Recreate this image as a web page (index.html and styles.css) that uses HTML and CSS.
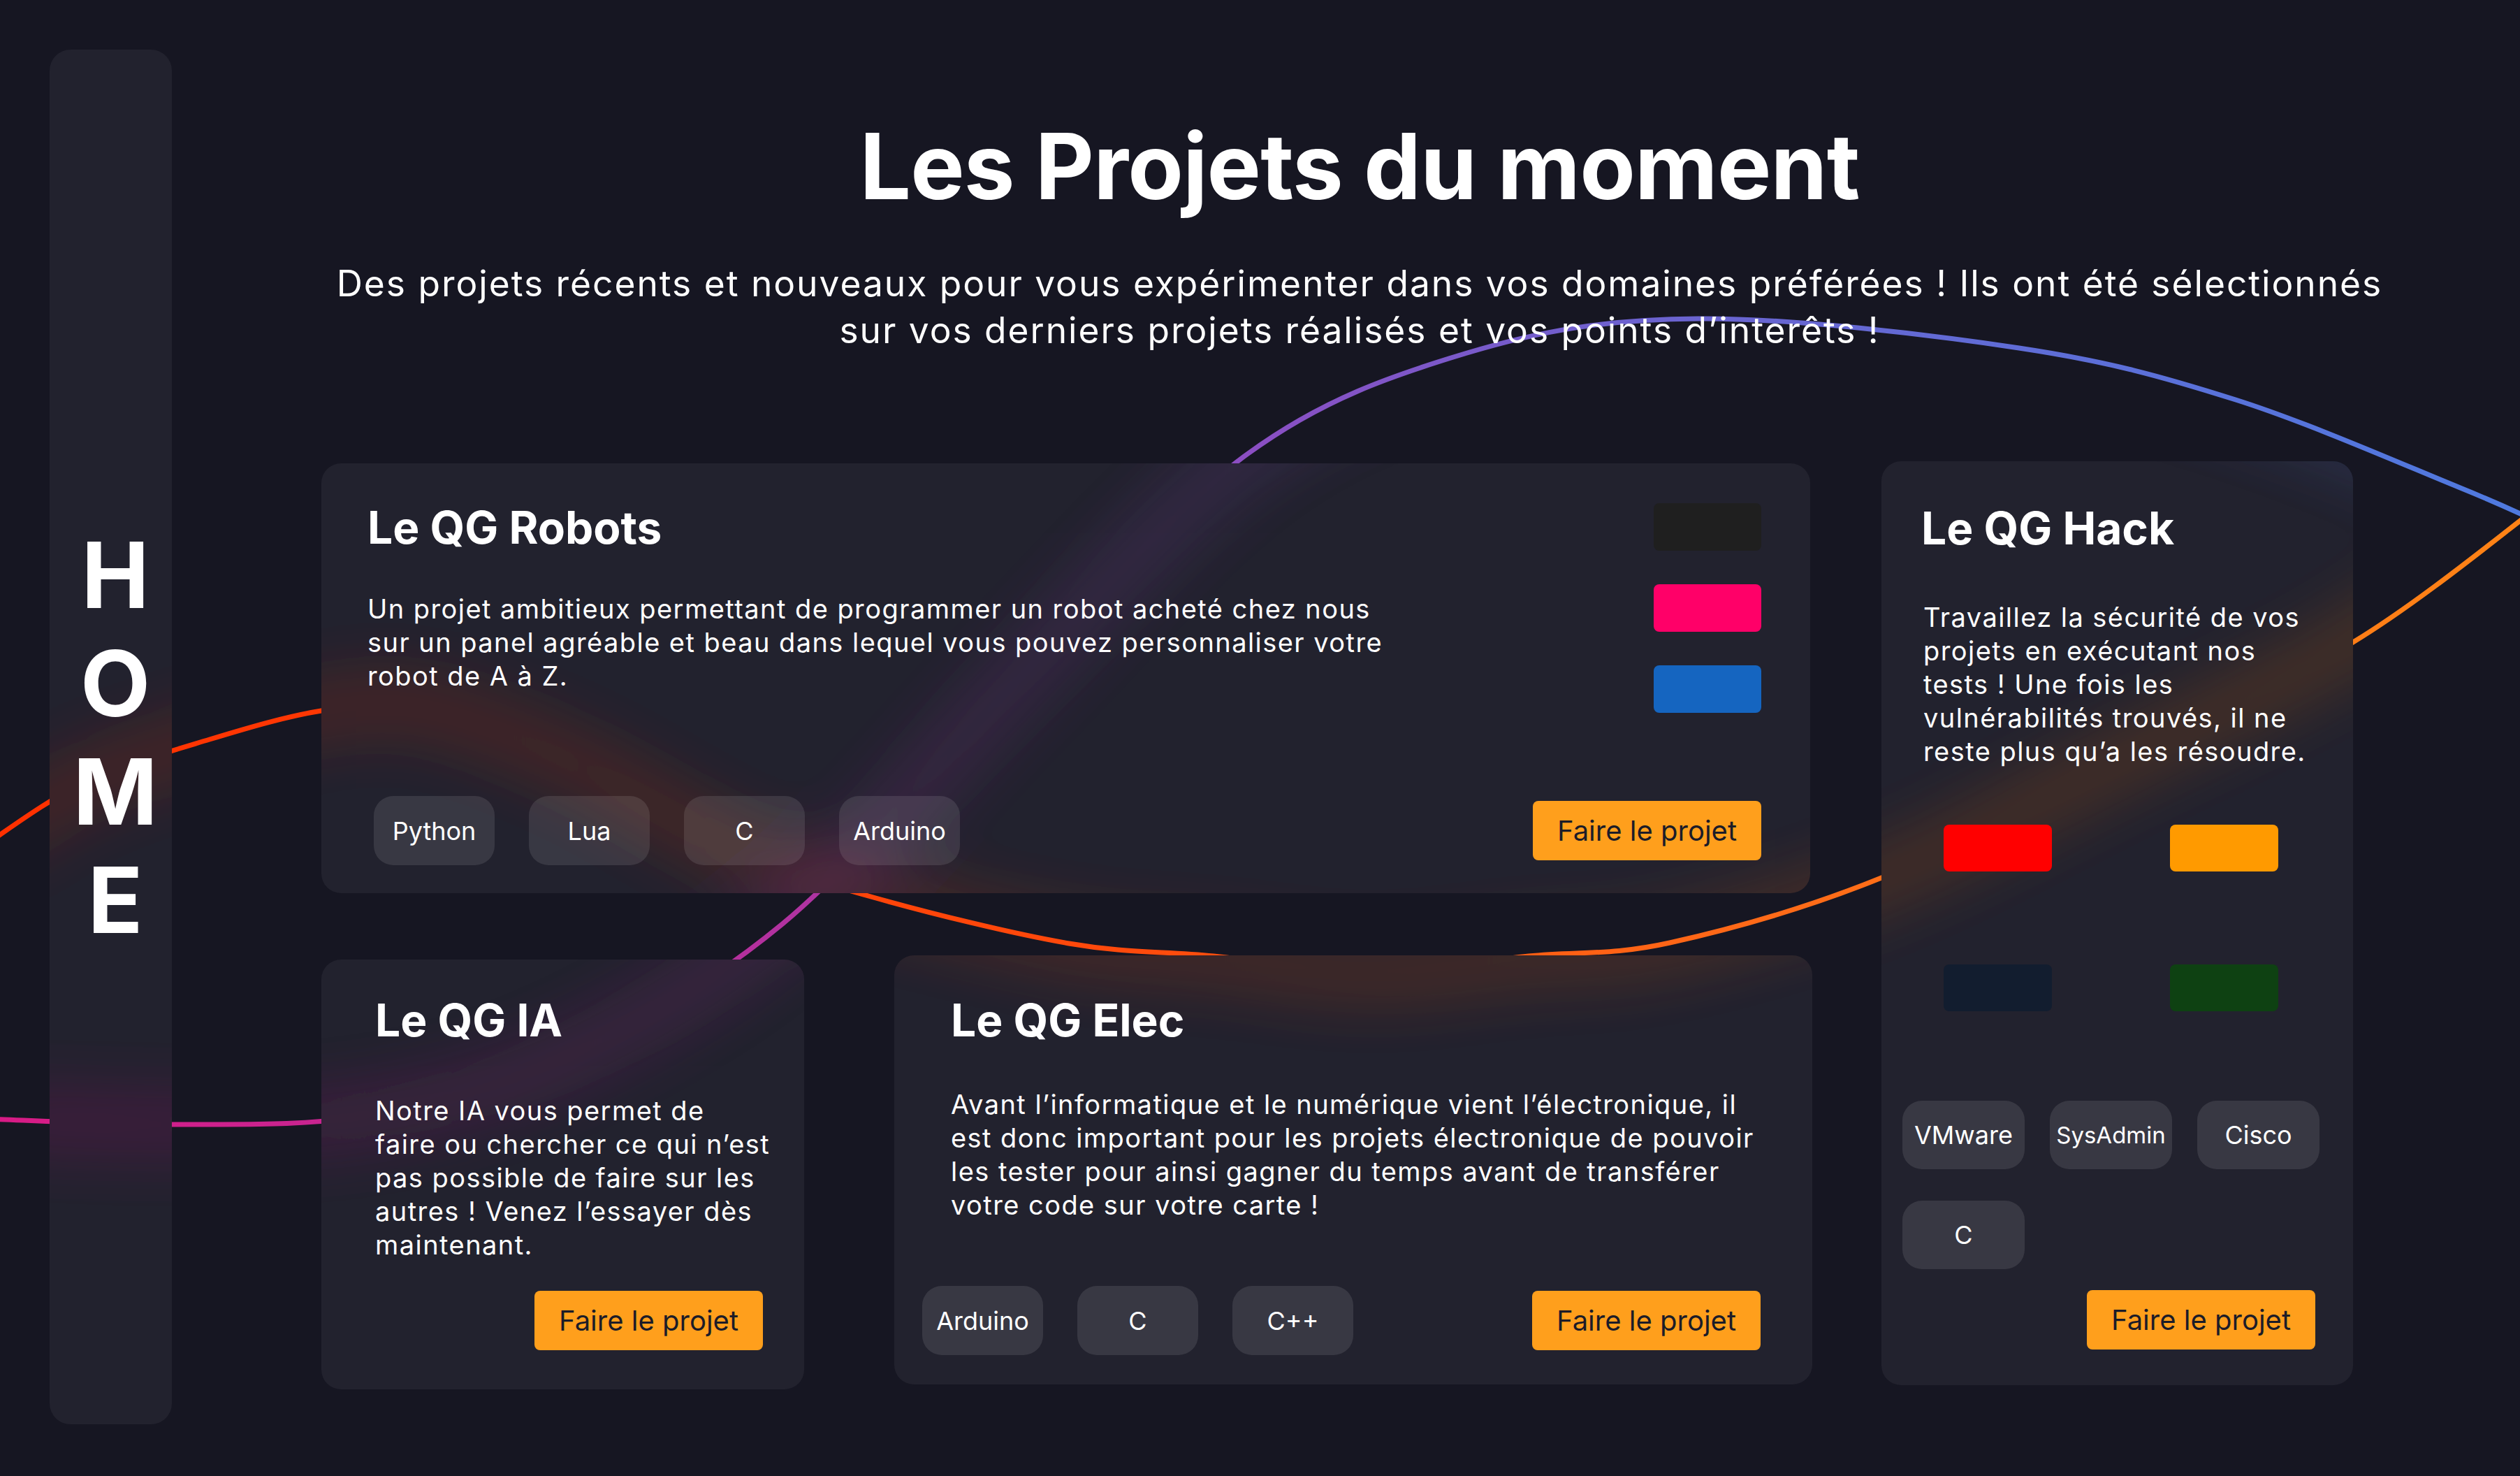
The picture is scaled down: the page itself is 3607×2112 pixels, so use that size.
FILE: index.html
```html
<!DOCTYPE html>
<html lang="fr">
<head>
<meta charset="utf-8">
<title>Les Projets du moment</title>
<link rel="stylesheet" href="styles.css">
</head>
<body>
<svg class="bg-lines" width="3607" height="2112" viewBox="0 0 3607 2112" xmlns="http://www.w3.org/2000/svg" aria-hidden="true">
  <defs>
    <linearGradient id="gradA" gradientUnits="userSpaceOnUse" x1="0" y1="0" x2="3607" y2="0">
      <stop offset="0" stop-color="#d81b86"/>
      <stop offset="0.3" stop-color="#b4309e"/>
      <stop offset="0.5" stop-color="#8a4fc3"/>
      <stop offset="0.65" stop-color="#6c62cf"/>
      <stop offset="1" stop-color="#4f7adf"/>
    </linearGradient>
    <linearGradient id="gradB" gradientUnits="userSpaceOnUse" x1="0" y1="0" x2="3607" y2="0">
      <stop offset="0" stop-color="#ff3000"/>
      <stop offset="0.45" stop-color="#ff4a0c"/>
      <stop offset="0.7" stop-color="#ff6a18"/>
      <stop offset="1" stop-color="#ff8316"/>
    </linearGradient>
    <filter id="glowBlur" filterUnits="userSpaceOnUse" x="-400" y="-400" width="4400" height="2900">
      <feGaussianBlur stdDeviation="50"/>
    </filter>
    <path id="lineA" fill="none" stroke="url(#gradA)" stroke-linecap="round" d="M -20 1601 C 25 1602.3, 160 1609.7, 250 1609 C 340 1608.3, 428.3 1612.2, 520 1597 C 611.7 1581.8, 700 1563.8, 800 1518 C 900 1472.2, 1011.7 1411.7, 1120 1322 C 1228.3 1232.3, 1339.2 1092, 1450 980 C 1560.8 868, 1676.7 729.2, 1785 650 C 1893.3 570.8, 1992.5 537.3, 2100 505 C 2207.5 472.7, 2298.3 457.2, 2430 456 C 2561.7 454.8, 2761.7 478.7, 2890 498 C 3018.3 517.3, 3095.2 538.8, 3200 572 C 3304.8 605.2, 3445.7 667.3, 3519 697 C 3592.3 726.7, 3619.8 741.2, 3640 750"/>
    <path id="lineB" fill="none" stroke="url(#gradB)" stroke-linecap="round" d="M -20 1208 C 3.3 1193.3, 66.7 1145, 120 1120 C 173.3 1095, 243.3 1075.2, 300 1058 C 356.7 1040.8, 410 1025, 460 1017 C 510 1009, 540 997.8, 600 1010 C 660 1022.2, 745 1055.8, 820 1090 C 895 1124.2, 978.3 1182.7, 1050 1215 C 1121.7 1247.3, 1170 1261.5, 1250 1284 C 1330 1306.5, 1448.8 1336, 1530 1350 C 1611.2 1364, 1665 1361, 1737 1368 C 1809 1375, 1886.8 1392, 1962 1392 C 2037.2 1392, 2116.7 1375.2, 2188 1368 C 2259.3 1360.8, 2305.8 1367.7, 2390 1349 C 2474.2 1330.3, 2586.3 1299.2, 2693 1256 C 2799.7 1212.8, 2917.5 1146.2, 3030 1090 C 3142.5 1033.8, 3266.3 980.7, 3368 919 C 3469.7 857.3, 3594.7 753.2, 3640 720"/>
  </defs>
  <use href="#lineA" stroke-width="7"/>
  <use href="#lineB" stroke-width="7"/>
</svg>

<div class="page">
  <aside class="sidebar panel">
    <svg class="glow" viewBox="71 71 175 1967" preserveAspectRatio="none" aria-hidden="true">
      <g filter="url(#glowBlur)" stroke-width="16"><use href="#lineA"/><use href="#lineB"/></g>
    </svg>
    <div class="home">
      <span>H</span>
      <span>O</span>
      <span>M</span>
      <span>E</span>
    </div>
  </aside>

  <main class="main">
    <header class="intro">
      <h1 class="intro-title">Les Projets du moment</h1>
      <p class="intro-text">Des projets récents et nouveaux pour vous expérimenter dans vos domaines préférées ! Ils ont été sélectionnés<br>sur vos derniers projets réalisés et vos points d’interêts !</p>
    </header>

    <section class="projects">
      <div class="projects-left">
        <article class="card panel card-robots">
          <svg class="glow" viewBox="460 663 2131 615" preserveAspectRatio="none" aria-hidden="true">
            <g filter="url(#glowBlur)" stroke-width="16"><use href="#lineA"/><use href="#lineB"/></g>
          </svg>
          <div class="card-top">
            <div class="card-head">
              <h2 class="card-title">Le QG Robots</h2>
              <p class="card-text">Un projet ambitieux permettant de programmer un robot acheté chez nous sur un panel agréable et beau dans lequel vous pouvez personnaliser votre robot de A à Z.</p>
            </div>
            <div class="swatch-col">
              <span class="swatch sw-black"></span>
              <span class="swatch sw-pink"></span>
              <span class="swatch sw-blue"></span>
            </div>
          </div>
          <div class="card-bottom">
            <div class="tags">
              <span class="tag">Python</span>
              <span class="tag">Lua</span>
              <span class="tag">C</span>
              <span class="tag">Arduino</span>
            </div>
            <a class="btn" href="#">Faire le projet</a>
          </div>
        </article>

        <div class="projects-row">
          <article class="card panel card-ia">
            <svg class="glow" viewBox="460 1373 691 615" preserveAspectRatio="none" aria-hidden="true">
              <g filter="url(#glowBlur)" stroke-width="16"><use href="#lineA"/><use href="#lineB"/></g>
            </svg>
            <h2 class="card-title">Le QG IA</h2>
            <p class="card-text">Notre IA vous permet de<br>faire ou chercher ce qui n’est pas possible de faire sur les autres ! Venez l’essayer dès maintenant.</p>
            <a class="btn" href="#">Faire le projet</a>
          </article>

          <article class="card panel card-elec">
            <svg class="glow" viewBox="1280 1367 1314 614" preserveAspectRatio="none" aria-hidden="true">
              <g filter="url(#glowBlur)" stroke-width="16"><use href="#lineA"/><use href="#lineB"/></g>
            </svg>
            <div class="card-head">
              <h2 class="card-title">Le QG Elec</h2>
              <p class="card-text">Avant l’informatique et le numérique vient l’électronique, il est donc important pour les projets électronique de pouvoir les tester pour ainsi gagner du temps avant de transférer votre code sur votre carte !</p>
            </div>
            <div class="card-bottom">
              <div class="tags">
                <span class="tag">Arduino</span>
                <span class="tag">C</span>
                <span class="tag">C++</span>
              </div>
              <a class="btn" href="#">Faire le projet</a>
            </div>
          </article>
        </div>
      </div>

      <article class="card panel card-hack">
        <svg class="glow" viewBox="2693 660 675 1322" preserveAspectRatio="none" aria-hidden="true">
          <g filter="url(#glowBlur)" stroke-width="16"><use href="#lineA"/><use href="#lineB"/></g>
        </svg>
        <h2 class="card-title">Le QG Hack</h2>
        <p class="card-text">Travaillez la sécurité de vos projets en exécutant nos tests ! Une fois les vulnérabilités trouvés, il ne reste plus qu’a les résoudre.</p>
        <div class="swatch-grid">
          <span class="swatch swatch-wide sw-red"></span>
          <span class="swatch swatch-wide sw-orange"></span>
          <span class="swatch swatch-wide sw-navy"></span>
          <span class="swatch swatch-wide sw-green"></span>
        </div>
        <div class="tags tags-wrap">
          <span class="tag tag-wide">VMware</span>
          <span class="tag tag-wide tag-small">SysAdmin</span>
          <span class="tag tag-wide">Cisco</span>
          <span class="tag tag-wide">C</span>
        </div>
        <a class="btn" href="#">Faire le projet</a>
      </article>
    </section>
  </main>
</div>
</body>
</html>
```

FILE: styles.css
```css
* {
  box-sizing: border-box;
}

html,
body {
  margin: 0;
  padding: 0;
}

body {
  width: 3607px;
  height: 2112px;
  overflow: hidden;
  position: relative;
  background: #161622;
  color: #ffffff;
  font-family: Inter, "Noto Sans", "Liberation Sans", sans-serif;
}

.bg-lines {
  position: absolute;
  left: 0;
  top: 0;
  width: 3607px;
  height: 2112px;
}

.page {
  position: relative;
  display: flex;
  align-items: flex-start;
  height: 2112px;
}

/* Panels: opaque surface with the soft glow of the curves seen through it */
.panel {
  position: relative;
  isolation: isolate;
  overflow: hidden;
  background: #22222e;
}

.glow {
  position: absolute;
  left: 0;
  top: 0;
  width: 100%;
  height: 100%;
  z-index: -1;
  opacity: 0.9;
}

/* Sidebar */
.sidebar {
  flex: none;
  margin: 71px 0 0 71px;
  width: 175px;
  height: 1967px;
  border-radius: 30px;
  display: flex;
  align-items: center;
  justify-content: center;
  padding-left: 13px;
}

.home {
  display: flex;
  flex-direction: column;
  align-items: center;
  font-weight: 700;
  font-size: 130px;
  line-height: 155px;
}

/* Main */
.main {
  flex: 1;
  padding-top: 160px;
}

.intro {
  padding-left: 39px;
  text-align: center;
}

.intro-title {
  margin: 0;
  font-size: 130px;
  font-weight: 700;
  line-height: 156px;
  letter-spacing: -0.8px;
}

.intro-text {
  margin: 56px 0 0;
  font-size: 51.5px;
  font-weight: 400;
  line-height: 67px;
  letter-spacing: 0.038em;
}

.projects {
  display: flex;
  align-items: flex-start;
  gap: 100px;
  margin: 154px 0 0 214px;
}

.projects-left {
  width: 2133px;
  margin-top: 3px;
  display: flex;
  flex-direction: column;
  gap: 89px;
}

.projects-row {
  display: flex;
  align-items: flex-start;
  gap: 129px;
}

/* Cards */
.card {
  flex: none;
  display: flex;
  flex-direction: column;
  border-radius: 28px;
}

.card-title {
  margin: 0;
  font-size: 64px;
  font-weight: 700;
  line-height: 77px;
  white-space: nowrap;
}

.card-text {
  margin: 0;
  font-size: 38px;
  font-weight: 400;
  line-height: 48px;
  letter-spacing: 0.038em;
}

.card-top {
  display: flex;
  justify-content: space-between;
  align-items: flex-start;
}

.card-bottom {
  display: flex;
  justify-content: space-between;
  align-items: center;
}

.card-robots {
  width: 2131px;
  height: 615px;
  padding: 53px 70px 40px 66px;
  justify-content: space-between;
}

.card-robots .card-text {
  margin-top: 54px;
  width: 1460px;
}

.card-robots .tags {
  margin-left: 9px;
}

.card-ia {
  width: 691px;
  height: 615px;
  margin-top: 6px;
  padding: 48px 59px 56px 77px;
}

.card-ia .card-text {
  margin-top: 67px;
  width: 590px;
}

.card-ia .btn {
  margin-top: auto;
  align-self: flex-end;
}

.card-elec {
  width: 1314px;
  height: 614px;
  padding: 54px 74px 42px 81px;
  justify-content: space-between;
}

.card-elec .card-text {
  margin-top: 58px;
  width: 1150px;
}

.card-elec .card-bottom {
  margin-left: -41px;
}

.card-hack {
  width: 675px;
  height: 1322px;
  padding: 57px 54px 51px 57px;
}

.card-hack .card-text {
  margin: 65px 0 0 3px;
  width: 550px;
}

.card-hack .btn {
  margin-top: auto;
  align-self: flex-end;
}

/* Colour swatches */
.swatch-col {
  display: flex;
  flex-direction: column;
  gap: 48px;
  margin-top: 4px;
}

.swatch {
  display: block;
  width: 154px;
  height: 68px;
  border-radius: 8px;
}

.swatch-grid {
  display: grid;
  grid-template-columns: 155px 155px;
  column-gap: 169px;
  row-gap: 133px;
  margin: 81px 0 0 32px;
}

.swatch-wide {
  width: 155px;
  height: 67px;
}

.sw-black { background: #1f1f1f; }
.sw-pink { background: #ff0068; }
.sw-blue { background: #1565c0; }
.sw-red { background: #ff0000; }
.sw-orange { background: #ff9a00; }
.sw-navy { background: #121d2f; }
.sw-green { background: #0e4112; }

/* Tags */
.tags {
  display: flex;
  gap: 49px;
}

.tag {
  width: 173px;
  height: 99px;
  border-radius: 28px;
  background: rgba(255, 255, 255, 0.1);
  display: flex;
  align-items: center;
  justify-content: center;
  font-size: 36px;
  line-height: 1;
  white-space: nowrap;
}

.tags-wrap {
  flex-wrap: wrap;
  width: 600px;
  gap: 45px 36px;
  margin: 128px 0 0 -27px;
}

.tag-wide {
  width: 175px;
  height: 98px;
}

.tag-small {
  font-size: 33px;
}

/* Button */
.btn {
  flex: none;
  width: 327px;
  height: 85px;
  border-radius: 8px;
  background: #ff9f1c;
  color: #1c1c28;
  font-size: 40px;
  line-height: 1;
  display: flex;
  align-items: center;
  justify-content: center;
  text-decoration: none;
  white-space: nowrap;
}
```
